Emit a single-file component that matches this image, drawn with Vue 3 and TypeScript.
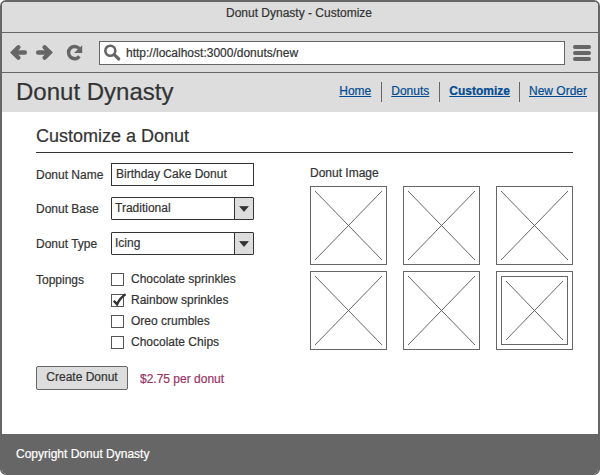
<script setup lang="ts">
import { ref } from 'vue'

interface NavItem { label: string; cls: string; active?: boolean }
interface Topping { label: string; checked: boolean }

const nav: NavItem[] = [
  { label: 'Home', cls: 'home' },
  { label: 'Donuts', cls: 'donuts' },
  { label: 'Customize', cls: 'customize', active: true },
  { label: 'New Order', cls: 'order' },
]
const toppings = ref<Topping[]>([
  { label: 'Chocolate sprinkles', checked: false },
  { label: 'Rainbow sprinkles', checked: true },
  { label: 'Oreo crumbles', checked: false },
  { label: 'Chocolate Chips', checked: false },
])
const selects = [
  { label: 'Donut Base', value: 'Traditional', cls: 'base' },
  { label: 'Donut Type', value: 'Icing', cls: 'type' },
]
const selectedImage = ref(5)
</script>

<template>
  <div class="window">
    <div class="titlebar"><span>Donut Dynasty - Customize</span></div>
    <div class="toolbar">
      <svg class="controls" width="80" height="20" viewBox="0 0 80 20" fill="none" stroke="#666">
        <g stroke-width="4.4" stroke-linecap="round" stroke-linejoin="miter">
          <path d="M5 9.5H15.8" />
          <path d="M9.4 4.3L4.2 9.5L9.4 14.7" />
          <path d="M29.2 9.5H40" />
          <path d="M35.6 4.3L40.8 9.5L35.6 14.7" />
        </g>
        <path d="M70.1 5.4A6.1 6.1 0 1 0 70.4 13.4" stroke-width="3.5" />
        <path d="M73.2 2.3V10.1H65Z" fill="#666" stroke="none" />
      </svg>
      <div class="address">
        <svg width="18" height="18" viewBox="0 0 18 18" fill="none" stroke="#666">
          <circle cx="6.3" cy="6.8" r="5" stroke-width="2.6" />
          <path d="M10.2 10.6L14.8 15" stroke-width="3.2" stroke-linecap="round" />
        </svg>
        <span>http://localhost:3000/donuts/new</span>
      </div>
      <div class="menu"><i></i><i></i><i></i></div>
    </div>
    <header class="header">
      <h1>Donut Dynasty</h1>
      <nav>
        <a v-for="item in nav" :key="item.label" :class="[item.cls, { active: item.active }]"><span>{{ item.label }}</span></a>
      </nav>
    </header>
    <main>
      <h2><span>Customize a Donut</span></h2>
      <div class="columns">
        <form @submit.prevent>
          <div class="row name">
            <label>Donut Name</label>
            <div class="field"><span>Birthday Cake Donut</span></div>
          </div>
          <div v-for="s in selects" :key="s.label" class="row" :class="s.cls">
            <label>{{ s.label }}</label>
            <div class="field select">
              <span>{{ s.value }}</span>
              <div class="arrow">
                <svg width="10" height="6" viewBox="0 0 10 6"><path d="M.7 .5H9.3L5 5.5Z" fill="#333" stroke="#333" stroke-width=".7" stroke-linejoin="round" /></svg>
              </div>
            </div>
          </div>
          <div class="row toppings">
            <label>Toppings</label>
            <div class="checks">
              <div v-for="t in toppings" :key="t.label" class="check" @click="t.checked = !t.checked">
                <svg width="16" height="15" viewBox="0 0 16 15" fill="none">
                  <rect x=".5" y="1.5" width="12" height="12" stroke="#555" />
                  <path v-if="t.checked" d="M2.8 7.8L6 11.4C7.8 7.4 10.8 3.6 14.6 1.2" stroke="#333" stroke-width="2.4" />
                </svg>
                <span>{{ t.label }}</span>
              </div>
            </div>
          </div>
          <div class="actions">
            <button type="button">Create Donut</button>
            <span class="price">$2.75 per donut</span>
          </div>
        </form>
        <section>
          <p>Donut Image</p>
          <div class="gallery">
            <div v-for="n in 6" :key="n" class="thumb" :class="{ selected: selectedImage === n - 1 }" @click="selectedImage = n - 1">
              <svg preserveAspectRatio="none" viewBox="0 0 100 100"><path d="M0 0L100 100M100 0L0 100" vector-effect="non-scaling-stroke" stroke="#555" stroke-width=".9" /></svg>
            </div>
          </div>
        </section>
      </div>
    </main>
    <footer><span>Copyright Donut Dynasty</span></footer>
  </div>
</template>

<style>
body { background: #fff; }
</style>

<style scoped>
* { box-sizing: border-box; }
.window {
  width: 600px; height: 475px; border: 2px solid #666; border-bottom-width: 1px; border-radius: 6px;
  overflow: hidden; display: flex; flex-direction: column; background: #fff; color: #333;
  font: 12px/14px "Liberation Sans", Arial, sans-serif; white-space: nowrap;
  -webkit-text-stroke: .2px;
}
svg { display: block; flex: none; }
.titlebar { height: 31px; background: #ddd; border-bottom: 1px solid #666; text-align: center; padding: 4px 2px 0 0; }
.toolbar { height: 40px; background: #ddd; border-bottom: 1px solid #666; display: flex; align-items: center; padding-left: 7px; }
.controls { margin-right: 10px; }
.address { width: 466px; height: 24px; background: #fff; border: 1px solid #666; display: flex; align-items: center; padding-left: 4px; gap: 4px; }
.menu { margin-left: 8px; width: 18px; display: flex; flex-direction: column; gap: 2px; }
.menu i { height: 4px; border-radius: 2px; background: #666; }
.header { height: 39px; background: #ddd; display: flex; justify-content: space-between; padding: 0 11px 0 14px; }
h1 { margin: 5px 0 0; font-size: 24px; line-height: 28px; font-weight: 400; }
nav { display: flex; padding-top: 9px; height: 29px; }
nav a { color: #004b93; text-decoration: underline; padding: 2px 0 0 9px; margin-right: 10px; cursor: pointer; }
nav a + a { border-left: 1px solid #666; }
nav a.customize { margin-right: 9px; }
nav a:last-child { margin-right: 0; }
.active { font-weight: 700; }
main { height: 322px; padding: 0 25px 0 34px; }
h2 { margin: 0; height: 41px; padding-top: 14px; border-bottom: 1px solid #333; font-size: 18px; line-height: 21px; font-weight: 400; }
.columns { display: flex; justify-content: space-between; }
form { width: 218px; padding-top: 10px; }
.row { display: flex; height: 23px; margin-bottom: 11px; }
.base { margin-bottom: 12px; }
.row > label { width: 75px; flex: none; padding-top: 5px; }
.field { flex: 1; border: 1px solid #333; padding: 3px 0 0 4px; }
.select { display: flex; justify-content: space-between; border-radius: 1px; padding: 0 0 0 3px; }
.select > span { padding-top: 3px; }
.arrow { width: 19px; background: #ddd; border-left: 1px solid #333; display: flex; align-items: center; justify-content: center; }
.toppings { height: 77px; margin: 17px 0; }
.toppings > label { padding-top: 1px; }
.checks { display: flex; flex-direction: column; gap: 6px; }
.check { display: flex; height: 15px; gap: 4px; }
.actions { display: flex; gap: 12px; }
button { width: 92px; height: 24px; border: 1px solid #666; border-radius: 2px; background: #ddd; color: #333; font: inherit; padding: 0 0 2px; }
.price { color: #993366; padding-top: 6px; }
section { width: 263px; padding-top: 13px; }
section p { margin: 0 0 6px; }
.gallery { display: grid; grid-template-columns: repeat(3, 77px); gap: 6px 16px; }
.thumb { height: 79px; border: 1px solid #666; padding: 4px; }
.thumb svg { width: 67px; height: 69px; }
.selected svg { border: 1px solid #666; padding: 4px; }
footer { flex: 1; background: #666; color: #fff; padding: 13px 14px 0; }
</style>
